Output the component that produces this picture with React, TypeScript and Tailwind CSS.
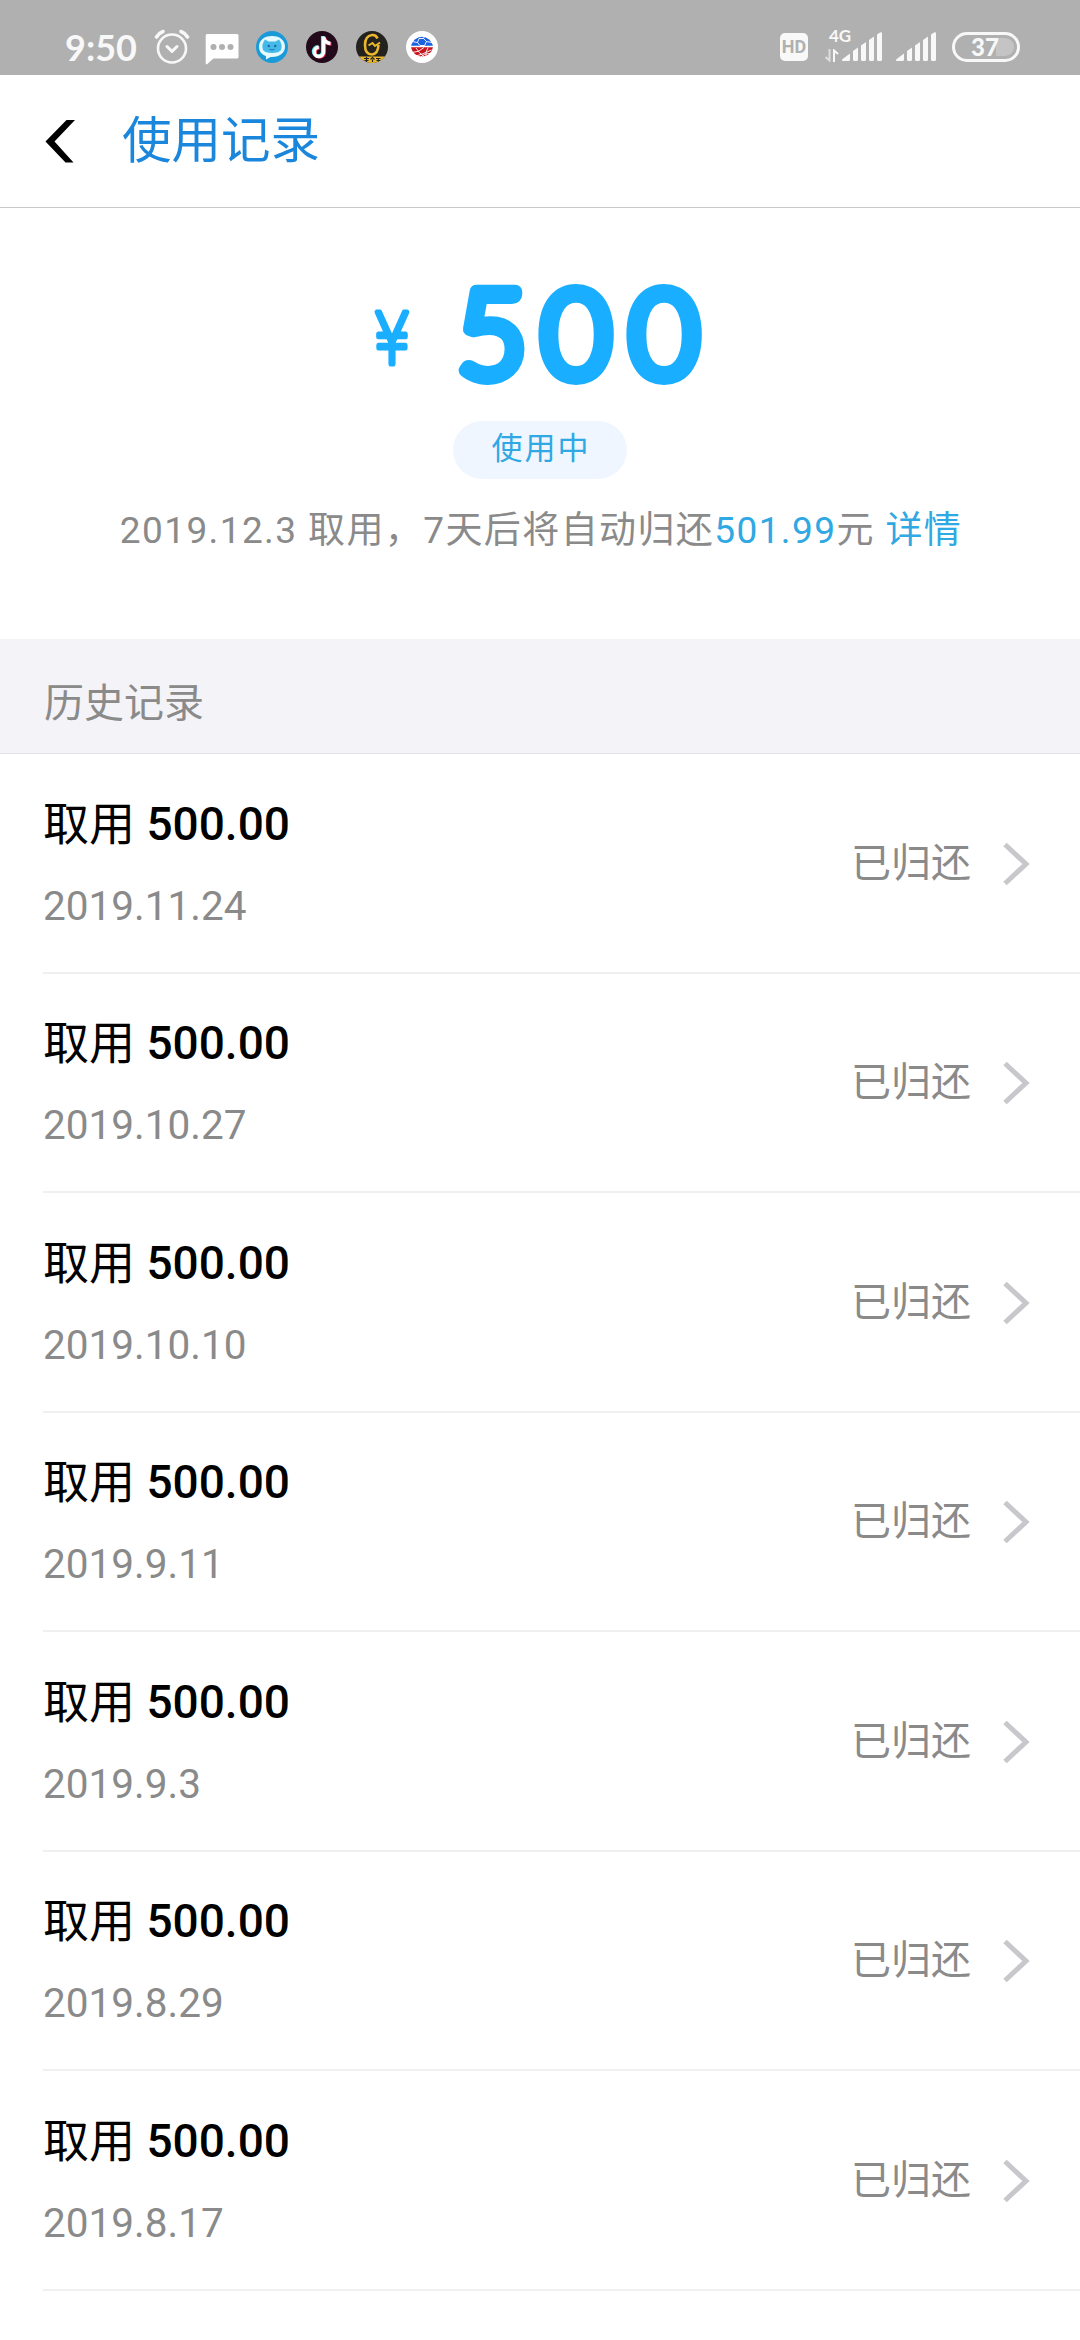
const cjk = "font-['Roboto','Noto_Sans_CJK_SC',sans-serif]";

const dates = ['2019.11.24', '2019.10.27', '2019.10.10', '2019.9.11', '2019.9.3', '2019.8.29', '2019.8.17'];

function AlarmIcon() {
  return (
    <svg width="36" height="36" viewBox="0 0 36 36" fill="none" stroke="#f8f8f8" strokeLinecap="round">
      <circle cx="18" cy="19.5" r="14" strokeWidth="2.6" />
      <path d="M13 17.5 18 22.3 23 17.5" strokeWidth="3" strokeLinejoin="round" />
      <path d="M2.5 8Q5 4 9 2.5M33.5 8Q31 4 27 2.5" strokeWidth="3.6" />
    </svg>
  );
}

function MessageIcon() {
  return (
    <svg width="34" height="32" viewBox="0 0 34 32">
      <path d="M2 1H32Q33.5 1 33.5 2.5V24Q33.5 25.5 32 25.5H8.500L2 31.300Q.7 31.600.7 30.500V2.500Q.7 1 2 1Z" fill="#fff" />
      <circle cx="8.500" cy="14" r="3" fill="#b0b0b0" />
      <circle cx="17" cy="14" r="3" fill="#b0b0b0" />
      <circle cx="25.500" cy="14" r="3" fill="#b0b0b0" />
    </svg>
  );
}

function ChatBotIcon() {
  return (
    <svg width="32" height="32" viewBox="0 0 32 32">
      <circle cx="16" cy="16" r="16" fill="#1b9ad9" />
      <path d="M16 5C7.500 5 3 10 3 15.500C3 20.500 6 24 10 25V28.500L14.500 26C23.500 26.500 29 22 29 15.500C29 10 24.500 5 16 5Z" fill="#e6f9ff" />
      <path d="M9 8.500 12.500 10.500H19.500L23 8.500Q27 14 25 19Q23 22 16 22Q9 22 7 19Q5 14 9 8.500Z" fill="#45b9ea" />
      <circle cx="12.800" cy="15" r="1.300" fill="#1b6fa5" />
      <circle cx="19.200" cy="15" r="1.300" fill="#1b6fa5" />
      <path d="M13.500 18.300Q16 19.500 18.500 18.300" stroke="#1b6fa5" strokeWidth="0.900" fill="none" />
    </svg>
  );
}

function MusicNoteIcon() {
  const d = 'M17.500 5.500V21A4.600 4.600 0 1 1 12.800 16.300M17.500 6Q18.500 12 24.500 12.500';
  return (
    <svg width="32" height="32" viewBox="0 0 32 32" fill="none">
      <circle cx="16" cy="16" r="16" fill="#230a1b" />
      <path d={d} stroke="#3fe0e0" strokeWidth="3.400" transform="translate(-.9 -.6)" />
      <path d={d} stroke="#e8305a" strokeWidth="3.400" transform="translate(.9 .6)" />
      <path d={d} stroke="#fff" strokeWidth="3.600" />
    </svg>
  );
}

function GoldIcon() {
  return (
    <svg width="32" height="32" viewBox="0 0 32 32" fill="none">
      <clipPath id="gold"><circle cx="16" cy="16" r="16" /></clipPath>
      <g clipPath="url(#gold)">
        <rect width="32" height="32" fill="#24221f" />
        <path d="M21.500 7.500Q20 3.500 16 4Q9 5 9 14Q9 23.500 16 23.500Q22 23 22.500 14" stroke="#e9b62c" strokeWidth="2.600" />
        <path d="M12.500 14.500 16.500 12 19 15 24 11.500" stroke="#e9b62c" strokeWidth="2" />
        <rect y="25.500" width="32" height="7" fill="#e9b62c" />
        <path d="M8 27.500H13M10.500 26V31M8.500 29.500H12.500M14.500 28.500 16.500 26.500 18.500 28.500M16.500 28.500V31M20 27.500H24.500M22.300 27V31M20.500 29.500H24.500" stroke="#24221f" strokeWidth="1.200" />
      </g>
    </svg>
  );
}

function SportsIcon() {
  return (
    <svg width="32" height="32" viewBox="0 0 32 32" fill="none">
      <circle cx="16" cy="16" r="16" fill="#fff" />
      <path d="M5 14.800A11.200 11 0 0 1 27 14.800Z" fill="#1b62e0" />
      <path d="M5 16.200H27A11.200 11.500 0 0 1 5 16.200Z" fill="#c8161e" />
      <path d="M13 7.500 11.500 11.500 14 14.500H18.500L20.500 10.500 17.500 7.500ZM6 10.500 11.500 11.500M20.500 10.500 26 11.500M17.500 7.500 19 4.500" stroke="#fff" strokeWidth="0.900" />
      <path d="M6 21.500Q13 21.500 18 16.500M9 25.500Q17 23 25.500 19M14 27Q18 22 25 22.500M10 17Q13 22 19 26.500M22 16.500Q19 21 20 27" stroke="#fff" strokeWidth="0.900" />
    </svg>
  );
}

function Signal() {
  return (
    <svg width="41" height="30" viewBox="0 0 41 30" fill="#f8f8f8">
      <path d="M0 29Q0 26.500 2 26L8 21.500V27.500Q8 29 6.500 29ZM11 19 16 15.500V27.500Q16 29 14.500 29H12.500Q11 29 11 27.500ZM19 13.500 24 10V27.500Q24 29 22.500 29H20.500Q19 29 19 27.500ZM27 8 32 4.500V27.500Q32 29 30.500 29H28.500Q27 29 27 27.500ZM35 2.500 38.500 .2Q40 0 40 1V27.500Q40 29 38.500 29H36.500Q35 29 35 27.500Z" />
    </svg>
  );
}

function StatusBar() {
  return (
    <div className="flex h-[75px] items-start bg-[#b0b0b0] pr-[60px] pl-[65px] text-[#f8f8f8]">
      <span className="mt-[26px] w-[89px] font-['Lato'] text-[36px] leading-[42px] font-bold">9:50</span>
      <div className="mt-[29px]"><AlarmIcon /></div>
      <div className="mt-[33px] ml-[15px]"><MessageIcon /></div>
      <div className="mt-[31px] ml-[17px] flex gap-[18px]">
        <ChatBotIcon />
        <MusicNoteIcon />
        <GoldIcon />
        <SportsIcon />
      </div>
      <div className="mt-[33px] ml-auto flex h-7 w-7 items-center justify-center rounded-[5px] bg-[#f8f8f8] font-['Roboto'] text-[18px] leading-none font-bold text-[#b0b0b0]">HD</div>
      <div className="mt-[28px] ml-[17px] w-[16px]">
        <div className="ml-1 font-['Lato'] text-[17px] leading-[16px] font-bold">4G</div>
        <svg className="mt-[5px]" width="14" height="13" viewBox="0 0 14 13" fill="none" strokeWidth="2">
          <path d="M4.500 0V11.500L.5 8" stroke="#dedede" />
          <path d="M9 13V1.500L13 5" stroke="#f8f8f8" />
        </svg>
      </div>
      <div className="mt-[32px] mr-[13px] ml-[1px]"><Signal /></div>
      <div className="mt-[32px] mr-[15px]"><Signal /></div>
      <div className="mt-[32px] flex h-[30px] w-[68px] rounded-full border-[3px] border-[#f8f8f8] p-[3px]">
        <div className="flex flex-1 items-center justify-center rounded-full bg-[linear-gradient(90deg,transparent_68%,#c4c4c4_68%)] pr-0.5 font-['Lato'] text-[24px] leading-none font-black">37</div>
      </div>
    </div>
  );
}

export default function App() {
  return (
    <div className={"h-[2340px] w-[1080px] overflow-hidden bg-white " + cjk}>
      <StatusBar />
      <header className="flex h-[133px] items-center border-b border-[#c8c8c8] pl-[45px]">
        <svg width="31" height="43" viewBox="0 0 31 43"><path d="M21.500 0H30L9.500 21.500 28.500 42.500H20.500L.5 21.500Z" /></svg>
        <h1 className="ml-[46px] text-[49.500px] leading-[60px] text-[#1a86dc]">使用记录</h1>
      </header>

      <section className="flex h-[431px] flex-col items-center">
        <svg className="mt-[42px] shrink-0 overflow-visible" width="380" height="150" viewBox="350 250 380 150" fill="#19aeff" stroke="#19aeff" strokeLinejoin="round" strokeLinecap="round">
          <text x="392" y="363.500" textAnchor="middle" fontFamily="DejaVu Sans" fontWeight="200" fontSize="72" strokeWidth="5" textLength="38" lengthAdjust="spacingAndGlyphs">¥</text>
          <text x="457 541 629" y="377" fontFamily="Lato" fontWeight="300" fontSize="121" strokeWidth="14">500</text>
        </svg>
        <div className="mt-[21px] flex h-[58px] w-[174px] items-center justify-center rounded-full bg-[#f0f6ff] pb-0.5 pl-0.5 text-[31px] tracking-[2px] text-[#2fa8e3]">使用中</div>
        <p className="mt-[25px] ml-[2px] text-[37px] leading-[54px] tracking-[1.400px] whitespace-nowrap text-[#8a8a8a]">
          2019.12.3 取用，7天后将自动归还<span className="text-[#2fa8e3]">501.99</span>元 <span className="text-[#2fa8e3]">详情</span>
        </p>
      </section>

      <div className="flex h-[115px] items-center border-b border-[#e4e4e6] bg-[#f3f3f8] pt-[15px] pl-[44px] text-[40px] text-[#8a8a8a]">历史记录</div>

      <ul className="ml-[43px]">
        {dates.map((date) => (
          <li key={date} className="flex h-[219.500px] items-center justify-between border-b-2 border-[#f0f0f0] pr-[50px]">
            <div className="pt-[4px]">
              <div className="text-[46px] leading-[60px] text-black">取用 <span className="font-medium">500.00</span></div>
              <div className="mt-[22px] text-[40.500px] leading-[60px] text-[#8a8a8a]">{date}</div>
            </div>
            <div className="flex items-center gap-[32px] pt-[2px] text-[40px] text-[#8a8a8a]">
              已归还
              <svg width="27" height="44" viewBox="0 0 27 44" fill="none" stroke="#c7c7cc" strokeWidth="5"><path d="M2 2.500 23 22 2 41.500" /></svg>
            </div>
          </li>
        ))}
      </ul>
    </div>
  );
}
